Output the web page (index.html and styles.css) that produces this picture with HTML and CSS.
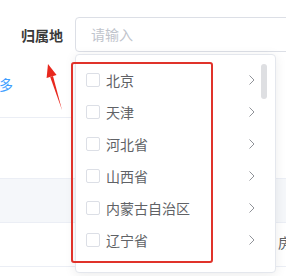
FILE: index.html
```html
<!DOCTYPE html>
<html lang="zh-CN">
<head>
    <meta charset="UTF-8">
    <title>归属地选择</title>
    <link rel="stylesheet" href="styles.css">
</head>
<body>
<div class="page">

    <!-- search form -->
    <div class="search">
        <label class="search-label">归属地</label>
        <div class="search-input">请输入</div>
    </div>

    <div class="toolbar">
        <a class="more">更多</a>
    </div>

    <div class="table">
        <div class="thead"></div>
        <div class="trow"><span class="cell">房屋</span></div>
    </div>

    <!-- cascader dropdown -->
    <div class="cascader">
        <ul class="menu">
            <li class="item"><span class="check"></span><span class="name">北京</span><svg class="chevron" viewBox="0 0 6 10"><path d="M0.5 0.5 L5 5 L0.5 9.5"/></svg></li>
            <li class="item"><span class="check"></span><span class="name">天津</span><svg class="chevron" viewBox="0 0 6 10"><path d="M0.5 0.5 L5 5 L0.5 9.5"/></svg></li>
            <li class="item"><span class="check"></span><span class="name">河北省</span><svg class="chevron" viewBox="0 0 6 10"><path d="M0.5 0.5 L5 5 L0.5 9.5"/></svg></li>
            <li class="item"><span class="check"></span><span class="name">山西省</span><svg class="chevron" viewBox="0 0 6 10"><path d="M0.5 0.5 L5 5 L0.5 9.5"/></svg></li>
            <li class="item"><span class="check"></span><span class="name">内蒙古自治区</span><svg class="chevron" viewBox="0 0 6 10"><path d="M0.5 0.5 L5 5 L0.5 9.5"/></svg></li>
            <li class="item"><span class="check"></span><span class="name">辽宁省</span><svg class="chevron" viewBox="0 0 6 10"><path d="M0.5 0.5 L5 5 L0.5 9.5"/></svg></li>
        </ul>
        <div class="scrollbar"></div>
    </div>

    <!-- annotation -->
    <div class="highlight"></div>
    <svg class="pointer" width="286" height="276" viewBox="0 0 286 276">
        <polygon points="62,110 50.2,76.9 53,76.1" fill="#e8281e"/>
        <polygon points="48,64 46.6,78 56.6,75" fill="#e8281e"/>
    </svg>

</div>
</body>
</html>
```

FILE: styles.css
```css
body {
    margin: 0;
    font-family: "Noto Sans CJK SC", "Noto Sans", sans-serif;
    background: #fff;
}
.page {
    position: relative;
    width: 286px;
    height: 276px;
    overflow: hidden;
}
.search {
    display: flex;
    align-items: center;
    padding-top: 17px;
    padding-left: 21px;
}
.search-label {
    flex: none;
    width: 54px;
    font-size: 14px;
    font-weight: 600;
    color: #3a3a3a;
}
.search-input {
    flex: none;
    width: 220px;
    height: 35px;
    box-sizing: border-box;
    border: 1px solid #dcdfe6;
    border-radius: 4px;
    padding-left: 15px;
    font-size: 14px;
    line-height: 33px;
    color: #c0c4cc;
}
.toolbar {
    width: 72px;
    height: 65px;
    display: flex;
    align-items: center;
    border-bottom: 1px solid #ebeef5;
}
.more {
    margin-left: -15px;
    font-size: 14px;
    color: #409eff;
    margin-top: -2px;
}
.table {
    margin-top: 60px;
}
.thead {
    height: 43px;
    background: #f5f7fa;
    border-top: 1px solid #ebeef5;
    border-bottom: 1px solid #ebeef5;
}
.trow {
    height: 43px;
    border-bottom: 1px solid #ebeef5;
    display: flex;
    align-items: center;
    padding-left: 278px;
}
.cell {
    font-size: 14px;
    color: #606266;
    white-space: nowrap;
    margin-top: -6px;
}
.cascader {
    position: absolute;
    left: 75px;
    top: 54px;
    width: 201px;
    height: 219px;
    box-sizing: border-box;
    background: #fff;
    border: 1px solid #e4e7ed;
    border-radius: 4px;
    box-shadow: 0 2px 12px rgba(0, 0, 0, 0.08);
    overflow: hidden;
}
.menu {
    list-style: none;
    margin: 0;
    padding: 9px 0 0;
}
.item {
    display: flex;
    align-items: center;
    height: 32px;
    padding-left: 10px;
    padding-right: 20px;
}
.check {
    flex: none;
    width: 12px;
    height: 12px;
    border: 1px solid #dcdfe6;
    border-radius: 2px;
    margin-right: 6px;
}
.name {
    flex: 1;
    font-size: 14px;
    color: #606266;
}
.chevron {
    width: 6px;
    height: 10px;
    fill: none;
    stroke: #909399;
    stroke-width: 1;
}
.scrollbar {
    position: absolute;
    left: 185px;
    top: 9px;
    width: 6px;
    height: 35px;
    border-radius: 3px;
    background: #dedfe2;
}
.highlight {
    position: absolute;
    left: 71px;
    top: 62px;
    width: 138px;
    height: 197px;
    border: 2px solid #e0322a;
    border-radius: 3px;
}
.pointer {
    position: absolute;
    left: 0;
    top: 0;
}
```
